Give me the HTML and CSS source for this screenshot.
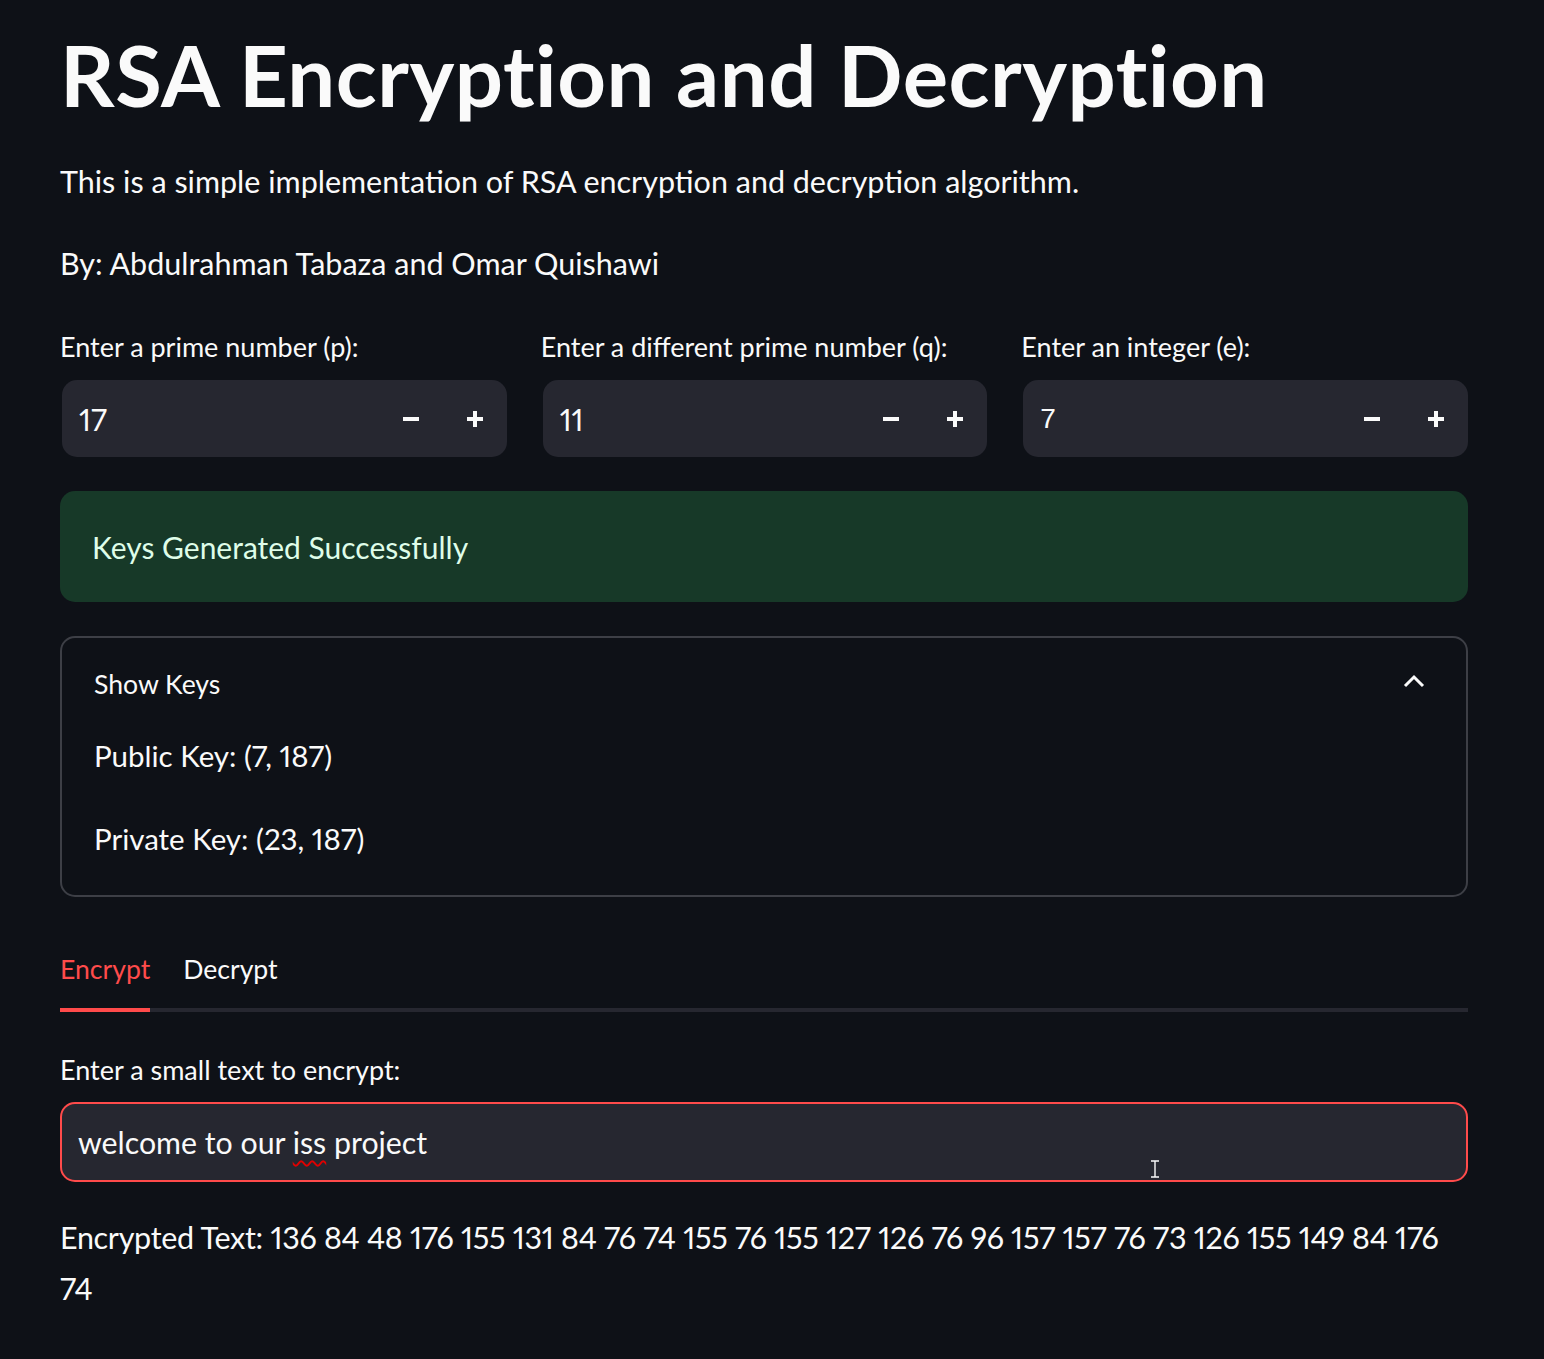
FILE: index.html
```html
<!DOCTYPE html>
<html>
<head>
<meta charset="utf-8">
<link rel="stylesheet" href="styles.css">
</head>
<body>
<main class="main">
  <h1 class="title">RSA Encryption and Decryption</h1>
  <p class="para p1">This is a simple implementation of RSA encryption and decryption algorithm.</p>
  <p class="para p2">By: Abdulrahman Tabaza and Omar Quishawi</p>

  <div class="cols">
    <div class="col">
      <label class="label">Enter a prime number (p):</label>
      <div class="num">
        <span class="num-val">17</span>
        <span class="step"><svg width="18" height="18" viewBox="0 0 18 18"><rect x="1" y="7" width="16" height="4" fill="#fafafa"/></svg></span>
        <span class="step"><svg width="18" height="18" viewBox="0 0 18 18"><rect x="1" y="7" width="16" height="4" fill="#fafafa"/><rect x="7" y="1" width="4" height="16" fill="#fafafa"/></svg></span>
      </div>
    </div>
    <div class="col">
      <label class="label">Enter a different prime number (q):</label>
      <div class="num">
        <span class="num-val">11</span>
        <span class="step"><svg width="18" height="18" viewBox="0 0 18 18"><rect x="1" y="7" width="16" height="4" fill="#fafafa"/></svg></span>
        <span class="step"><svg width="18" height="18" viewBox="0 0 18 18"><rect x="1" y="7" width="16" height="4" fill="#fafafa"/><rect x="7" y="1" width="4" height="16" fill="#fafafa"/></svg></span>
      </div>
    </div>
    <div class="col">
      <label class="label">Enter an integer (e):</label>
      <div class="num">
        <span class="num-val arial">7</span>
        <span class="step"><svg width="18" height="18" viewBox="0 0 18 18"><rect x="1" y="7" width="16" height="4" fill="#fafafa"/></svg></span>
        <span class="step"><svg width="18" height="18" viewBox="0 0 18 18"><rect x="1" y="7" width="16" height="4" fill="#fafafa"/><rect x="7" y="1" width="4" height="16" fill="#fafafa"/></svg></span>
      </div>
    </div>
  </div>

  <div class="success">Keys Generated Successfully</div>

  <div class="expander">
    <div class="exp-head">
      <span class="exp-title">Show Keys</span>
      <svg class="chev" width="24" height="16" viewBox="0 0 24 16"><polyline points="3,13 12,4 21,13" fill="none" stroke="#fafafa" stroke-width="3"/></svg>
    </div>
    <p class="key">Public Key: (7, 187)</p>
    <p class="key">Private Key: (23, 187)</p>
  </div>

  <div class="tabs">
    <span class="tab active">Encrypt</span>
    <span class="tab">Decrypt</span>
  </div>
  <div class="tabline"><div class="tabline-active"></div></div>

  <label class="label label2">Enter a small text to encrypt:</label>
  <div class="textin">
    <span class="textin-val">welcome to our <span class="spell">iss</span> project</span>
    <svg class="ibeam" width="10" height="18" viewBox="0 0 10 18"><path d="M1 1H9M5 1V17M1 17H9" stroke="#fafafa" stroke-width="1.4" fill="none"/></svg>
  </div>

  <p class="enc">Encrypted Text: 136 84 48 176 155 131 84 76 74 155 76 155 127 126 76 96 157 157 76 73 126 155 149 84 176 74</p>
</main>
</body>
</html>
```

FILE: styles.css
```css
html, body {
  margin: 0;
  padding: 0;
  background: #0e1117;
}
body {
  color: #fafafa;
  font-family: Lato, "Liberation Sans", sans-serif;
  font-variant-numeric: proportional-nums;
}
.main {
  width: 1408px;
  margin-left: 60px;
  padding-top: 24px;
  padding-bottom: 40px;
}
.title {
  margin: 0;
  font-size: 85px;
  font-weight: 700;
  line-height: 100px;
  letter-spacing: 0.5px;
}
.para {
  margin: 0;
  font-size: 30.5px;
  line-height: 48px;
}
.p1 { margin-top: 33px; }
.p2 { margin-top: 34px; }

.cols {
  display: flex;
  gap: 34px;
  margin-top: 40px;
}
.col {
  flex: 1;
  display: flex;
  flex-direction: column;
}
.label {
  display: block;
  font-size: 27px;
  line-height: 40px;
  height: 40px;
}
.num {
  margin-top: 13px;
  margin-left: 2px;
  height: 77px;
  background: #262730;
  border-radius: 15px;
  display: flex;
  align-items: center;
  padding-left: 17px;
  padding-right: 0;
}
.num-val {
  flex: 1;
  font-size: 30px;
}
.num-val.arial {
  font-family: "Liberation Sans", Arial, sans-serif;
  font-size: 28px;
}
.step {
  width: 64px;
  display: flex;
  justify-content: center;
}

.success {
  margin-top: 34px;
  height: 111px;
  background: #173928;
  border-radius: 15px;
  color: #dffde9;
  font-size: 30px;
  display: flex;
  align-items: center;
  padding-left: 32px;
}

.expander {
  margin-top: 34px;
  border: 2px solid #3d3f46;
  border-radius: 15px;
  padding: 0 32px 24px 32px;
  height: 261px;
  box-sizing: border-box;
}
.exp-head {
  display: flex;
  align-items: center;
  justify-content: space-between;
  height: 92px;
}
.exp-title {
  font-size: 26.6px;
}
.chev {
  margin-right: 8px;
  margin-top: -6px;
}
.key {
  margin: 0;
  font-size: 29.5px;
  line-height: 44px;
  margin-top: 4px;
}
.key + .key {
  margin-top: 39px;
}

.tabs {
  margin-top: 52px;
  display: flex;
  gap: 33px;
}
.tab {
  font-size: 26.6px;
  line-height: 40px;
}
.tab.active {
  color: #ff4b4b;
}
.tabline {
  margin-top: 19px;
  height: 4px;
  background: #262730;
}
.tabline-active {
  width: 90px;
  height: 4px;
  background: #ff4b4b;
}
.label2 {
  margin-top: 38px;
}
.textin {
  margin-top: 12px;
  height: 80px;
  box-sizing: border-box;
  border: 2px solid #ff4b4b;
  border-radius: 15px;
  background: #262730;
  display: flex;
  align-items: center;
  padding-left: 16px;
  position: relative;
}
.textin-val {
  font-size: 30.3px;
}
.spell {
  text-decoration: underline wavy #e00000;
  text-decoration-thickness: 1.5px;
  text-underline-offset: 6px;
}
.ibeam {
  position: absolute;
  left: 1088px;
  top: 56px;
}
.enc {
  margin: 0;
  margin-top: 30px;
  font-size: 30.5px;
  line-height: 51px;
  letter-spacing: -0.3px;
}
```
